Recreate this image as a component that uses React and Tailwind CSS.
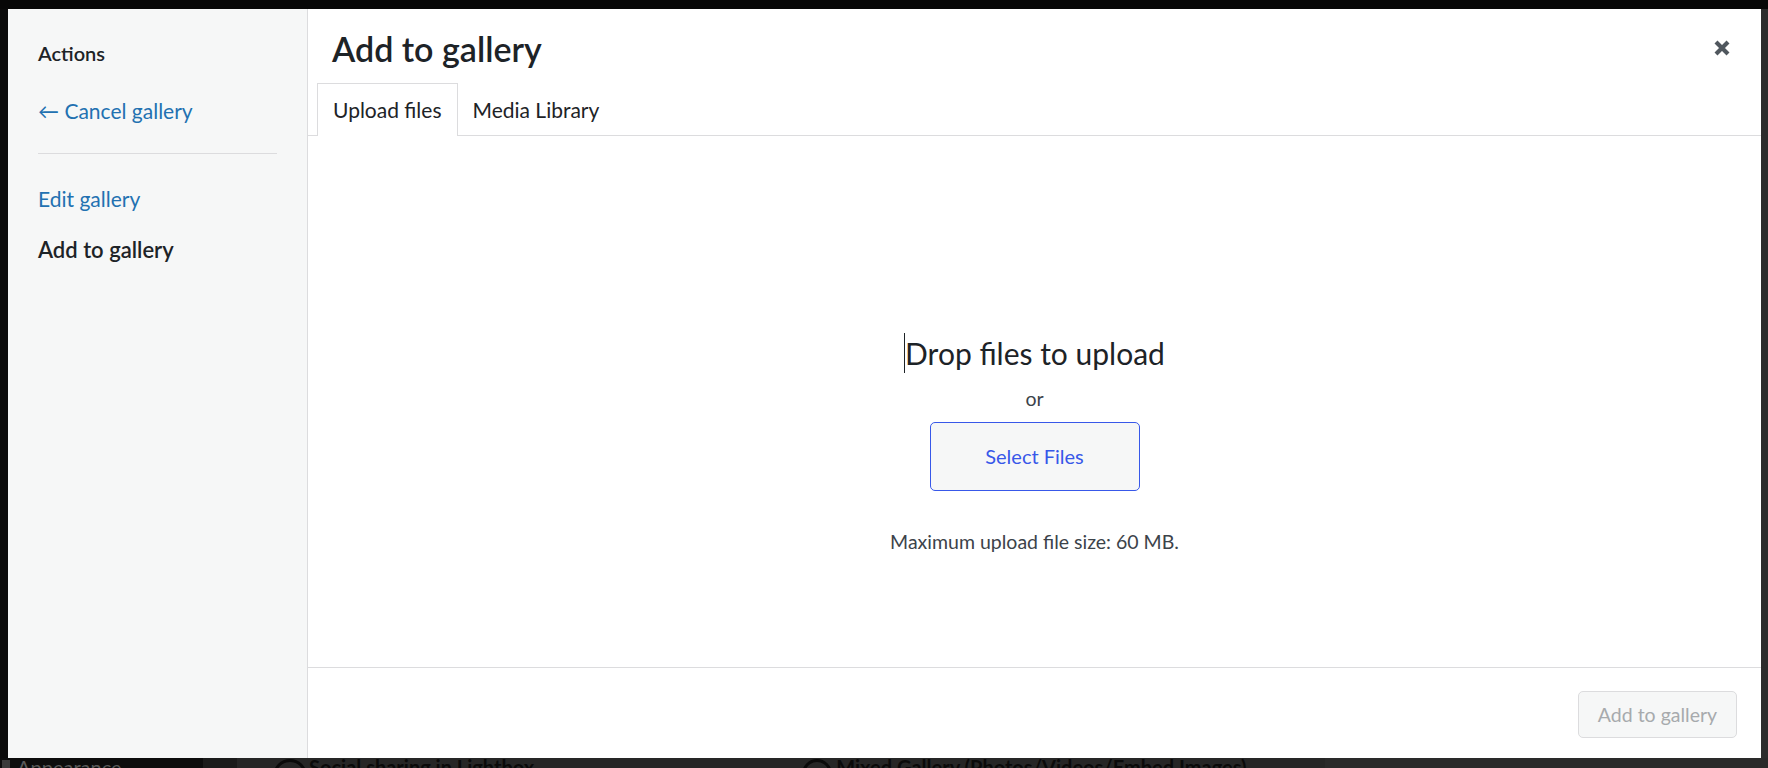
import React from "react";

const FONT = { fontFamily: '"Lato", "Noto Sans", sans-serif' };

function CloseIcon() {
  return (
    <svg width="18" height="18" viewBox="0 0 18 18" aria-hidden="true">
      <path
        d="M3 3 L15 15 M15 3 L3 15"
        stroke="#50575e"
        strokeWidth="4.2"
        strokeLinecap="butt"
        fill="none"
      />
    </svg>
  );
}

function Sidebar() {
  return (
    <div className="w-[300px] shrink-0 bg-[#f6f7f7] border-r border-[#dcdcde] px-[30px] pt-[30px]">
      <div className="h-[28px] leading-[28px] text-[20px] font-semibold text-[#1d2327]">Actions</div>
      <div className="mt-[30px] h-[28px] leading-[28px] text-[21px] text-[#2271b1]">← Cancel gallery</div>
      <div className="mt-[28px] h-px bg-[#dcdcde] w-[239px]" />
      <div className="mt-[31px] h-[28px] leading-[28px] text-[21px] text-[#2271b1]">Edit gallery</div>
      <div className="mt-[23px] h-[28px] leading-[28px] text-[22px] font-semibold text-[#1d2327]">Add to gallery</div>
    </div>
  );
}

function Content() {
  return (
    <div className="flex-1 flex flex-col bg-white min-w-0">
      <div className="pt-[20px] pl-[24px] pr-[30px] flex justify-between items-start">
        <h1 className="h-[40px] leading-[40px] text-[34px] font-semibold text-[#1d2327]">Add to gallery</h1>
        <button className="mt-[10px] w-[18px] h-[18px] flex items-center justify-center">
          <CloseIcon />
        </button>
      </div>
      <div className="mt-[14px] flex items-end border-b border-[#dcdcde] pl-[9px] h-[53px]">
        <div className="h-[53px] -mb-px bg-white border border-b-0 border-[#dcdcde] px-[15px] pt-[12px] text-[21px] leading-[27px] text-[#1d2327]">
          Upload files
        </div>
        <div className="h-[52px] px-[15px] pt-[13px] text-[21px] leading-[27px] text-[#1d2327]">Media Library</div>
      </div>
      <div className="flex-1 flex flex-col items-center pt-[199px]">
        <div className="flex items-center h-[36px]">
          <span className="w-px h-[40px] bg-[#1d2327]" />
          <span className="text-[30px] leading-[36px] text-[#1d2327]">Drop files to upload</span>
        </div>
        <div className="mt-[15px] text-[19.5px] leading-[26px] text-[#3c434a]">or</div>
        <button className="mt-[10px] w-[210px] h-[69px] rounded-[5px] border border-[#3858e9] bg-[#f6f7f7] text-[20px] text-[#3858e9] leading-[27px]">
          Select Files
        </button>
        <div className="mt-[38px] text-[19.5px] leading-[26px] text-[#3c434a]">Maximum upload file size: 60 MB.</div>
      </div>
      <div className="h-[91px] border-t border-[#dcdcde] flex justify-end items-start pt-[23px] pr-[24px]">
        <button className="w-[159px] h-[47px] rounded-[5px] border border-[#dcdcde] bg-[#f6f7f7] text-[19.5px] text-[#a7aaad]">
          Add to gallery
        </button>
      </div>
    </div>
  );
}

function Backdrop() {
  return (
    <div className="h-[10px] flex overflow-hidden">
      <div className="w-[203px] bg-[#0d0d0d] flex items-start">
        <span className="ml-[2px] mt-[2px] w-[8px] h-[8px] bg-[#3a3a3a]" />
        <span className="ml-[7px] text-[20px] leading-[20px] -mt-[1px] text-[#5a5a5a]">Appearance</span>
      </div>
      <div className="w-[34px] bg-[#1b1b1b]" />
      <div className="w-[1088px] bg-[#262626] flex items-start">
        <span className="ml-[36px] mt-[1px] w-[34px] h-[34px] rounded-full border-[3px] border-[#0a0a0a]" />
        <span className="ml-[2px] text-[20px] leading-[20px] font-bold -mt-[1px] text-[#0a0a0a]">Social sharing in Lightbox</span>
        <span className="ml-[268px] mt-[1px] w-[30px] h-[30px] rounded-full border-[3px] border-[#0a0a0a]" />
        <span className="ml-[4px] text-[20px] leading-[20px] font-bold -mt-[1px] text-[#0a0a0a]">Mixed Gallery (Photos/Videos/Embed Images)</span>
      </div>
      <div className="flex-1 bg-[#2a2a2a]" />
    </div>
  );
}

export default function App() {
  return (
    <div className="w-[1768px] h-[768px] bg-[#0a0a0a] flex flex-col overflow-hidden" style={FONT}>
      <div className="h-[9px] shrink-0 bg-[#070707]" />
      <div className="h-[749px] shrink-0 flex">
        <div className="w-[8px] bg-[#0b0b0b]" />
        <div className="w-[1753px] flex">
          <Sidebar />
          <Content />
        </div>
        <div className="w-[7px] bg-[#2c2c2c]" />
      </div>
      <Backdrop />
    </div>
  );
}
